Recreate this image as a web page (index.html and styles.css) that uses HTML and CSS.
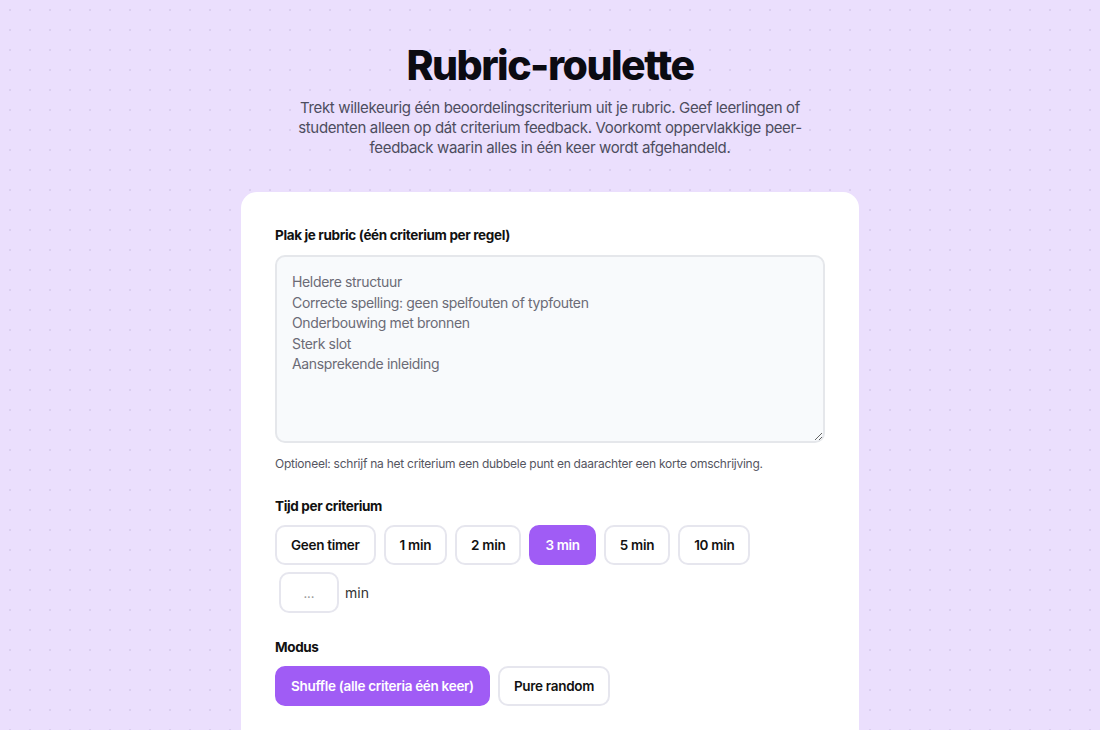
FILE: index.html
```html
<!DOCTYPE html>
<html lang="nl">
<head>
<meta charset="utf-8">
<title>Rubric-roulette</title>
<link rel="stylesheet" href="styles.css">
</head>
<body>
<main class="page">
  <header class="hero">
    <h1 class="title">Rubric-roulette</h1>
    <p class="intro">Trekt willekeurig één beoordelingscriterium uit je rubric. Geef leerlingen of studenten alleen op dát criterium feedback. Voorkomt oppervlakkige peer-feedback waarin alles in één keer wordt afgehandeld.</p>
  </header>
  <section class="card">
    <label class="label" for="rubric">Plak je rubric (één criterium per regel)</label>
    <textarea id="rubric" class="rubric">Heldere structuur
Correcte spelling: geen spelfouten of typfouten
Onderbouwing met bronnen
Sterk slot
Aansprekende inleiding</textarea>
    <p class="hint">Optioneel: schrijf na het criterium een dubbele punt en daarachter een korte omschrijving.</p>

    <div class="label">Tijd per criterium</div>
    <div class="options">
      <button class="opt">Geen timer</button>
      <button class="opt">1 min</button>
      <button class="opt">2 min</button>
      <button class="opt active">3 min</button>
      <button class="opt">5 min</button>
      <button class="opt">10 min</button>
      <span class="custom"><input class="custom-input" type="text" placeholder="..."><span class="unit">min</span></span>
    </div>

    <div class="label">Modus</div>
    <div class="options">
      <button class="opt active">Shuffle (alle criteria één keer)</button>
      <button class="opt">Pure random</button>
    </div>
  </section>
</main>
</body>
</html>
```

FILE: styles.css
```css
* { box-sizing: border-box; }
html, body { margin: 0; padding: 0; }
body {
  font-family: Inter, "Noto Sans", sans-serif;
  color: #111;
  background-color: #ebdffd;
  background-image: radial-gradient(circle, #dbcff0 1px, transparent 1.3px);
  background-size: 20px 20px;
  background-position: 0 0;
  min-height: 730px;
}
.page {
  display: flex;
  flex-direction: column;
  align-items: center;
  padding-top: 41px;
}
.hero { text-align: center; }
.title {
  margin: 0;
  font-size: 41px;
  font-weight: 800;
  letter-spacing: -1.5px;
  line-height: 48px;
  color: #0b0b12;
}
.intro {
  margin: 9px auto 0;
  max-width: 520px;
  font-size: 15px;
  letter-spacing: -0.35px;
  line-height: 20px;
  color: #4d4d5e;
}
.card {
  margin-top: 34px;
  width: 618px;
  background: #fff;
  border-radius: 16px;
  padding: 34px 34px 40px;
  display: flex;
  flex-direction: column;
}
.label {
  display: block;
  font-size: 13.5px;
  font-weight: 700;
  letter-spacing: -0.35px;
  color: #111;
  line-height: 18px;
  margin-bottom: 10px;
}
.rubric {
  display: block;
  width: 550px;
  height: 188px;
  margin-top: 1px;
  background: #f8fafc;
  border: 2px solid #e5e7eb;
  border-radius: 10px;
  padding: 15px 15px;
  font-family: Inter, "Noto Sans", sans-serif;
  font-size: 14px;
  letter-spacing: -0.35px;
  line-height: 20.6px;
  color: #6b6b76;
  resize: vertical;
}
.hint {
  margin: 13px 0 25px;
  font-size: 12px;
  letter-spacing: -0.25px;
  line-height: 16px;
  color: #55555f;
}
.options {
  display: flex;
  flex-wrap: wrap;
  gap: 7px 8px;
  margin-bottom: 25px;
}
.opt {
  height: 40px;
  padding: 0 14px;
  border: 2px solid #e6e6ee;
  border-radius: 10px;
  background: #fff;
  font-family: Inter, "Noto Sans", sans-serif;
  font-size: 13.5px;
  font-weight: 600;
  color: #111;
  letter-spacing: -0.3px;
}
.opt.active {
  background: #a05cf5;
  border-color: #a05cf5;
  color: #fff;
}
.custom {
  display: flex;
  align-items: center;
  gap: 6px;
  margin-left: 4px;
}
.custom-input {
  width: 60px;
  height: 41px;
  border: 2px solid #e6e6ee;
  border-radius: 10px;
  text-align: center;
  font-family: Inter, "Noto Sans", sans-serif;
  font-size: 13px;
}
.custom-input::placeholder { color: #999; }
.unit {
  font-size: 14px;
  color: #333;
}
```
